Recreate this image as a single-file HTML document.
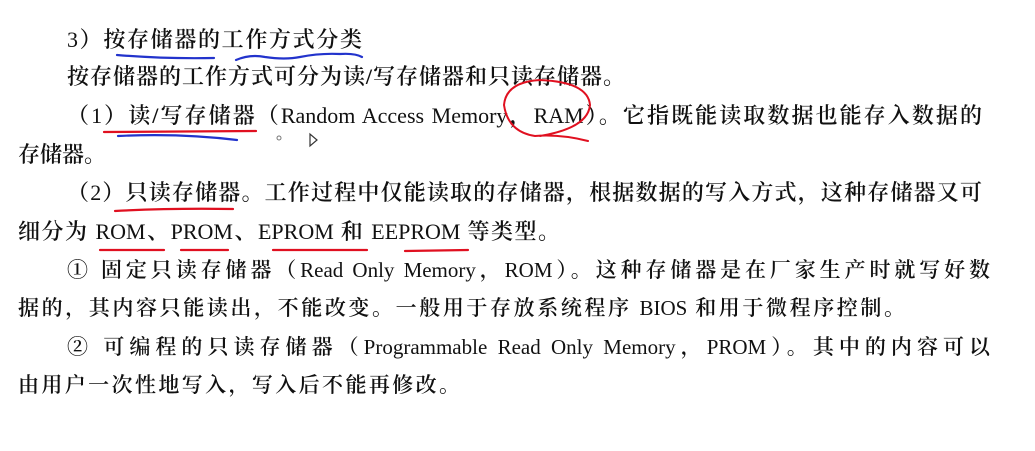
<!DOCTYPE html>
<html><head><meta charset="utf-8"><style>
html,body{margin:0;padding:0;background:#fff;width:1035px;height:451px;overflow:hidden;position:relative}
.l{position:absolute;white-space:nowrap;font-family:"Liberation Serif","Noto Serif CJK SC",serif;font-size:22px;line-height:28px;color:#111;font-weight:600;text-align:justify;text-align-last:justify;}
.l b{font-weight:400}
.s{font-size:21px}
svg{position:absolute;left:0;top:0}
</style></head><body>
<div class="l" style="left:67px;top:26px;width:295px"><b>3</b>）按存储器的工作方式分类</div>
<div class="l" style="left:67px;top:63px;width:558px">按存储器的工作方式可分为读/写存储器和只读存储器。</div>
<div class="l" style="left:67px;top:102px;width:915px">（<b>1</b>）读/写存储器（<b>Random Access Memory</b>，<b>RAM</b>）。它指既能读取数据也能存入数据的</div>
<div class="l" style="left:18px;top:141px;width:82px">存储器。</div>
<div class="l" style="left:67px;top:179px;width:915px">（<b>2</b>）只读存储器。工作过程中仅能读取的存储器，根据数据的写入方式，这种存储器又可</div>
<div class="l" style="left:18px;top:218px;width:542px">细分为 <b>ROM</b>、<b>PROM</b>、<b>EPROM</b> 和 <b>EEPROM</b> 等类型。</div>
<div class="l s" style="left:67px;top:256px;width:923px">① 固定只读存储器（<b>Read Only Memory</b>，<b>ROM</b>）。这种存储器是在厂家生产时就写好数</div>
<div class="l s" style="left:18px;top:294px;width:887px">据的，其内容只能读出，不能改变。一般用于存放系统程序 <b>BIOS</b> 和用于微程序控制。</div>
<div class="l s" style="left:67px;top:333px;width:923px">② 可编程的只读存储器（<b>Programmable Read Only Memory</b>，<b>PROM</b>）。其中的内容可以</div>
<div class="l s" style="left:18px;top:371px;width:442px">由用户一次性地写入，写入后不能再修改。</div>
<svg width="1035" height="451" fill="none" stroke-linecap="round">
<path d="M117 55 Q165 59 214 58" stroke="#2233cc" stroke-width="2.2"/>
<path d="M236 60 Q250 54 265 57 Q285 60 300 57 Q320 53 340 54 Q355 53 362 57" stroke="#2233cc" stroke-width="2.2"/>
<path d="M104 132 L256 131" stroke="#e01020" stroke-width="2.2"/>
<path d="M118 136 Q180 133 237 140" stroke="#2233cc" stroke-width="2.2"/>
<path d="M588 141 Q560 134 535 136 Q508 132 504 105 Q506 82 540 80 Q588 82 590 105 Q588 128 540 136" stroke="#e01020" stroke-width="2"/>
<path d="M115 211 Q170 208 233 209" stroke="#e01020" stroke-width="2.2"/>
<path d="M100 250 L164 250 M181 250 L228 250 M273 250 L367 250 M405 251 L468 250" stroke="#e01020" stroke-width="2.2"/>
<circle cx="279" cy="138" r="2" stroke="#777" stroke-width="1"/>
<path d="M310 134 L310 146 L317 140 Z" stroke="#333" stroke-width="1.2" fill="#fff"/>
</svg>
</body></html>
